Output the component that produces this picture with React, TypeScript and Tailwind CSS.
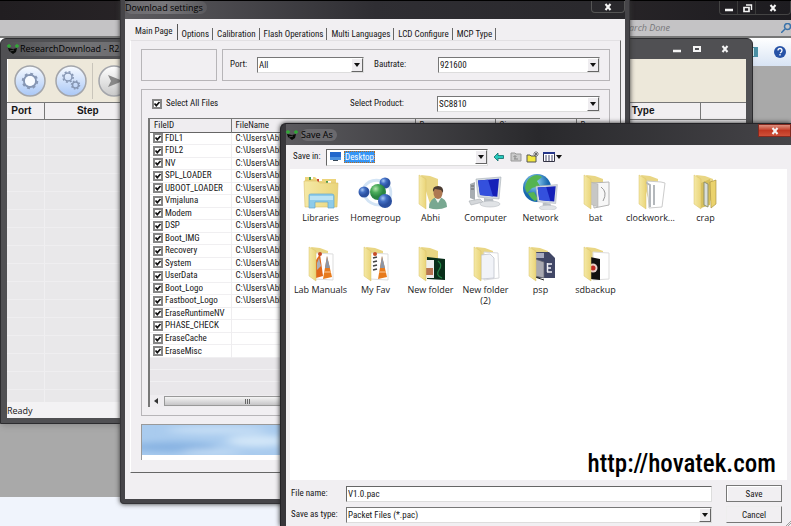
import { ReactNode } from "react";

const files = [
  "FDL1", "FDL2", "NV", "SPL_LOADER", "UBOOT_LOADER", "Vmjaluna", "Modem", "DSP", "Boot_IMG",
  "Recovery", "System", "UserData", "Boot_Logo", "Fastboot_Logo", "EraseRuntimeNV", "PHASE_CHECK",
  "EraseCache", "EraseMisc"
];

const tabs = ["Options", "Calibration", "Flash Operations", "Multi Languages", "LCD Configure", "MCP Type"];

const folderItems = [
  { label: "Libraries", kind: "libraries" },
  { label: "Homegroup", kind: "homegroup" },
  { label: "Abhi", kind: "user" },
  { label: "Computer", kind: "computer" },
  { label: "Network", kind: "network" },
  { label: "bat", kind: "bat" },
  { label: "clockwork...", kind: "clockwork" },
  { label: "crap", kind: "crap" },
  { label: "Lab Manuals", kind: "vlc" },
  { label: "My Fav", kind: "fav" },
  { label: "New folder", kind: "green" },
  { label: "New folder (2)", kind: "paper" },
  { label: "psp", kind: "psp" },
  { label: "sdbackup", kind: "sd" }
];

const Caption = ({ type }: { type: "min" | "max" | "restore" | "close" }) => (
  <svg viewBox="0 0 12 10" className="w-3 h-[10px]" fill="none" stroke="#f4f4f4" strokeWidth="2">
    {type === "min" && <path d="M2 7h8" strokeWidth="2.5" />}
    {type === "max" && <path d="M3 3h6v4H3z" />}
    {type === "restore" && (
      <>
        <path d="M3 4.5h5v4H3z" strokeWidth="1.7" />
        <path d="M5 2h5.5v5" strokeWidth="1.4" />
      </>
    )}
    {type === "close" && <path d="M3.5 2l5 6M8.500 2l-5 6" />}
  </svg>
);

const AppIcon = () => (
  <svg viewBox="0 0 12 12" className="w-3 h-3">
    <path d="M0 3h4M2 1v4M8 3h4M10 1v4" stroke="#2fae35" strokeWidth="1.300" />
    <path d="M1 5l5 1 4-1-1 4-3 2-4-3z" fill="#080a08" />
    <path d="M3 8l4-1" stroke="#777" strokeWidth=".6" />
  </svg>
);

const Select = ({ id, value, className }: { id: string; value: string; className: string }) => (
  <span className={"relative block h-4 " + className}>
    <select
      id={id}
      className="block appearance-none w-full h-4 pl-px pr-4 bg-white border border-t-[#777] border-l-[#777] border-b-[#ddd] border-r-[#ddd] leading-[14px] outline-none"
    >
      <option>{value}</option>
    </select>
    <Arrow />
  </span>
);

const Arrow = () => (
  <span className="absolute right-px top-px w-3 h-[14px] bg-[#efedf0] border border-white border-r-[#666] border-b-[#666] flex items-center justify-center pointer-events-none">
    <svg viewBox="0 0 6 4" className="w-[6px] h-1"><path d="M0 0h6L3 4z" fill="#111" /></svg>
  </span>
);

const Tick = ({ id }: { id: string }) => (
  <span className="relative block w-[10px] h-[10px] shrink-0">
    <input id={id} type="checkbox" defaultChecked className="peer block appearance-none w-[10px] h-[10px] bg-white border-2 border-[#858585]" />
    <svg viewBox="0 0 10 10" className="absolute inset-0 w-[10px] h-[10px] pointer-events-none hidden peer-checked:block">
      <path d="M2.500 4.500L4.300 6.600L7.500 3" fill="none" stroke="#111" strokeWidth="1.700" />
    </svg>
  </span>
);

const Folder = ({ children }: { children?: ReactNode }) => (
  <>
    <path d="M8 1l9 1 8 3v20l-8 5z" fill="#e9d684" />
    {children}
    <path d="M6 1l7 4v30l-7-5z" fill="url(#folderFront)" stroke="#d9c26a" strokeWidth=".5" />
  </>
);

const Monitor = () => (
  <>
    <path d="M8 5l25-2-2 22-21-2z" fill="#d7dde3" stroke="#a5acb4" strokeWidth=".6" />
    <path d="M10 6.500l21-1.700-1.700 18L12 21z" fill="#1520b8" />
    <path d="M10 6.500l10-.8 5 16.700L12 21z" fill="#3450dd" />
    <path d="M16 24l9 1 1 4h-10z" fill="#b8bec4" />
    <ellipse cx="22" cy="30" rx="10" ry="3" fill="#e0e3e6" stroke="#b9bdc2" strokeWidth=".6" />
  </>
);

const ItemIcon = ({ kind }: { kind: string }) => (
  <svg viewBox="0 0 36 36" className="w-9 h-9">
    {kind === "libraries" && (
      <>
        <path d="M2 3h10l2 2h19v24H2z" fill="#ecd47b" />
        <path d="M6 4h4M14 6h5M23 8h5" stroke="#fff" strokeWidth="2" />
        <path d="M7 3v3M24 7v3" stroke="#4b9b50" strokeWidth="2" />
        <path d="M15 5v3" stroke="#c94635" strokeWidth="2" />
        <path d="M1 7h13l3 2h18l-1 24H2z" fill="url(#folderFront)" stroke="#dbc06a" strokeWidth=".6" />
        <path d="M6 21q0-1 2-1h21q2 0 2 2v12h-6v-6H12v6H6z" fill="#8ecbe9" stroke="#64a8cf" strokeWidth=".7" />
        <path d="M7 22h23v4H7z" fill="#bbe3f5" />
      </>
    )}
    {kind === "homegroup" && (
      <>
        <path d="M6 13Q12 4 24 7M7 23q6 9 17 8M31 12q3 5 1 12" fill="none" stroke="#d3e4f5" strokeWidth="3" />
        <circle cx="6" cy="18" r="5.500" fill="url(#blueBall)" />
        <circle cx="27" cy="9" r="5.500" fill="url(#blueBall)" />
        <circle cx="20" cy="18" r="8" fill="url(#greenBall)" />
        <circle cx="27" cy="27" r="7" fill="url(#blueBall)" />
      </>
    )}
    {kind === "user" && (
      <>
        <Folder />
        <path d="M16 34q0-10 9-11 9 1 9 10-9 4-18 1z" fill="#78a891" />
        <path d="M22 24l3 5 3-5z" fill="#edf4ef" />
        <ellipse cx="25" cy="19" rx="4.500" ry="6" fill="#ad7852" />
        <path d="M20 18q-1-6 5-6 6 0 5 7l-2-3-6-1z" fill="#4b3b31" />
      </>
    )}
    {kind === "computer" && (
      <>
        <path d="M2 10l5-2v18l-5-2z" fill="#a7adb2" />
        <path d="M3 12h3M3 15h3" stroke="#666" strokeWidth="1" />
        <path d="M1 27l11-2 3 3-12 3z" fill="#d4d7da" stroke="#a8adb1" strokeWidth=".6" />
        <Monitor />
      </>
    )}
    {kind === "network" && (
      <>
        <circle cx="14" cy="14" r="14" fill="url(#globe)" />
        <path d="M8 3q6-4 11 0l-5 4 3 5-8 2-5 5-2-5q1-8 6-11zM5 19l6-1 4 7-3 2q-5-3-7-8z" fill="#55b450" />
        <g transform="translate(6 8) scale(.86)"><Monitor /></g>
      </>
    )}
    {kind === "bat" && (
      <Folder>
        <path d="M14 9l17-1v23l-15 3z" fill="#f7f7f7" stroke="#b4b4b4" />
        <path d="M23 13q7 5 2 14" fill="none" stroke="#999" />
        <path d="M12 8l8 2v23l-8-3z" fill="#c7c7c5" stroke="#aaa" strokeWidth=".5" />
      </Folder>
    )}
    {kind === "clockwork" && (
      <Folder>
        <path d="M14 7l14 1 4 1-3 24-13 1z" fill="#fff" stroke="#ccc" />
        <path d="M12 8l5 3v22M21 11v20" fill="none" stroke="#b4b8bc" strokeWidth="2" />
      </Folder>
    )}
    {kind === "crap" && (
      <Folder>
        <path d="M13 9l9-4v26l-9 3z" fill="#d7c05c" />
        <path d="M16 8l4 2v23l-4-2z" fill="#d9dedc" stroke="#8f916f" />
        <path d="M22 8l6-2v24l-5 4z" fill="#ead26d" stroke="#a18939" strokeWidth=".6" />
      </Folder>
    )}
    {(kind === "vlc" || kind === "fav") && (
      <Folder>
        <path d="M12 7l18 1v26l-18-1z" fill="#fff" stroke="#ddd" />
        {kind === "vlc" && (
          <>
            <path d="M17 8l3 22-7 2V14z" fill="#e0661a" />
            <path d="M16 12l2 8-4 4v-7z" fill="#a9afb9" />
          </>
        )}
        {kind === "fav" && <path d="M15 12l4-1M15 16l4-1M15 20l4-1M15 24l4-1" stroke="#444" strokeWidth="1.800" />}
        <path d="M24 10l5 21-9 2z" fill="#e77a1c" />
        <path d="M24 10l3 12h-5z" fill="#8d96a5" />
        <path d="M21 26h7" stroke="#f4b070" strokeWidth="1.500" />
        <circle cx="17" cy="8" r="2" fill="#c74c25" />
      </Folder>
    )}
    {kind === "green" && (
      <Folder>
        <path d="M14 11l18 2v21l-18-1z" fill="#092e1a" />
        <path d="M12 14h9v18h-9z" fill="#eee" />
        <path d="M13 22h7v7h-7z" fill="#b87552" />
        <path d="M25 15q5 4 1 9t3 8" fill="none" stroke="#238545" strokeWidth="1.200" />
      </Folder>
    )}
    {kind === "paper" && (
      <Folder>
        <path d="M16 6l14 1 1 25-15 2z" fill="#fff" stroke="#d8d9dc" />
        <path d="M13 9l9-1 4 4v20l-13 1z" fill="#f1f3f8" stroke="#bfc3cb" strokeWidth=".8" />
      </Folder>
    )}
    {kind === "psp" && (
      <Folder>
        <path d="M13 6h13l6 6v20H13z" fill="#414766" />
        <path d="M13 7h8v5h-8z" fill="#a8abc0" />
        <path d="M24 18h5M24 22h4M24 26h5M24.500 17v9" stroke="#f0f0f5" strokeWidth="1.500" />
        <path d="M12 13l9 3v16l-9-2z" fill="#a9a9b1" stroke="#62636d" strokeWidth=".7" />
        <path d="M12 31l9 3" stroke="#222" />
      </Folder>
    )}
    {kind === "sd" && (
      <Folder>
        <path d="M15 6l16 1v26l-16 1z" fill="#fff" stroke="#ddd" />
        <path d="M12 11l10 2v21l-10-1z" fill="#101010" />
        <circle cx="15" cy="22" r="4.500" fill="#e8cfc9" />
        <circle cx="15" cy="22" r="2.500" fill="#bf2923" />
      </Folder>
    )}
  </svg>
);

const SvgDefs = () => (
  <svg className="absolute w-0 h-0" aria-hidden="true">
    <defs>
      <linearGradient id="folderFront"><stop stopColor="#f5e9a6" /><stop offset="1" stopColor="#ead57a" /></linearGradient>
      <radialGradient id="blueBall" cx=".35" cy=".3"><stop stopColor="#a8c8f5" /><stop offset=".5" stopColor="#426fc4" /><stop offset="1" stopColor="#2a4f9f" /></radialGradient>
      <radialGradient id="greenBall" cx=".35" cy=".3"><stop stopColor="#b4e4b0" /><stop offset=".5" stopColor="#4bac5a" /><stop offset="1" stopColor="#2a8542" /></radialGradient>
      <radialGradient id="globe" cx=".4" cy=".3"><stop stopColor="#a5e2ff" /><stop offset="1" stopColor="#1767ad" /></radialGradient>
      <linearGradient id="roundBlue" x2="0" y2="1"><stop stopColor="#f8fbff" /><stop offset="1" stopColor="#a9c7f6" /></linearGradient>
      <linearGradient id="roundGray" x2="0" y2="1"><stop stopColor="#fff" /><stop offset="1" stopColor="#c9c9c9" /></linearGradient>
      <filter id="soft"><feGaussianBlur stdDeviation="6 3" /></filter>
    </defs>
  </svg>
);

const SkyBanner = () => (
  <svg viewBox="0 0 470 30" preserveAspectRatio="none" className="block w-full h-full">
    <path d="M0 0h470v30H0z" fill="#a9cbee" />
    <g filter="url(#soft)">
      <ellipse cx="30" cy="22" rx="45" ry="5" fill="#88b3e2" />
      <ellipse cx="75" cy="5" rx="50" ry="4" fill="#c6def5" />
      <ellipse cx="115" cy="16" rx="30" ry="6" fill="#d2e6f8" />
      <ellipse cx="70" cy="27" rx="30" ry="3" fill="#c3dcf4" />
    </g>
  </svg>
);

const RoundButton = ({ label, children, gray }: { label: string; children: ReactNode; gray?: boolean }) => (
  <button aria-label={label} className="w-8 h-8 shrink-0">
    <svg viewBox="0 0 32 32" className="w-8 h-8" fill="none">
      <circle cx="16" cy="16" r="15" fill={gray ? "url(#roundGray)" : "url(#roundBlue)"} stroke="#a3a5aa" strokeWidth="1.500" />
      {children}
    </svg>
  </button>
);

const Explorer = () => (
  <div className="flex flex-col h-full">
    <div className="h-5 shrink-0 flex justify-end border-t border-black bg-linear-to-r from-[#211e21] via-[#342e30] to-[#1d1c20]">
      <div className="flex w-[72px] h-[14px] border border-t-0 border-[#444] rounded-b">
        <button aria-label="Minimize" className="flex-1 flex items-center justify-center"><Caption type="min" /></button>
        <button aria-label="Restore" className="flex-1 flex items-center justify-center border-x border-[#3a3a3a]"><Caption type="restore" /></button>
        <button aria-label="Close" className="flex-[2] flex items-center justify-center"><Caption type="close" /></button>
      </div>
    </div>
    <div className="h-[18px] shrink-0 flex items-center justify-end bg-[#c4c3c5] border-b-2 border-[#777]">
      <span className="flex items-center w-[171px] justify-between">
        <span className="italic text-[9px] text-[#77777a] font-['Open_Sans',sans-serif]">Search Done</span>
        <svg viewBox="0 0 10 10" className="w-[10px] h-[10px]" fill="none" stroke="#3972aa" strokeWidth="1.500"><circle cx="6.500" cy="3.500" r="3" /><path d="M4 6L0 10" /></svg>
      </span>
    </div>
    <div className="h-7 shrink-0 flex items-center justify-end gap-4 pr-[5px] bg-linear-to-b from-white to-[#d8e4f4]">
      <svg viewBox="0 0 10 10" className="w-[10px] h-[10px]"><path d="M0 0h10v10H0z" fill="#4b91a6" /><path d="M1 1h5v8H1z" fill="#d6eff5" /></svg>
      <svg viewBox="0 0 12 12" className="w-3 h-3"><circle cx="6" cy="6" r="6" fill="#2752a6" /><path d="M4 4.500q0-2 2-2t2 2Q8 6 6 7M6 8v1.500" stroke="#fff" fill="none" strokeWidth="1.300" /></svg>
    </div>
    <div className="flex-1 bg-[#a9a9a9]" />
    <div className="h-[29px] shrink-0 bg-[#f0f4fc]" />
  </div>
);

const ResearchWindow = () => (
  <section className="absolute left-0 right-[38px] top-[38px] bottom-[102px] flex flex-col px-[6px] pb-[5px] bg-[#505053] border border-[#2c2c2f] rounded-t-md shadow-md">
    <header className="h-5 shrink-0 flex items-center justify-between font-['Open_Sans',sans-serif] text-[9px] text-black">
      <span className="flex items-center gap-px whitespace-nowrap bg-linear-to-r from-[#505053] via-[#747477] to-[#68686b]"><AppIcon />ResearchDownload - R2.9.9001</span>
      <span className="flex h-4 w-[75px] items-center">
        <button aria-label="Minimize"><Caption type="min" /></button>
        <button aria-label="Maximize" className="ml-2"><Caption type="max" /></button>
        <button aria-label="Close" className="ml-4"><Caption type="close" /></button>
      </span>
    </header>
    <div className="h-[43px] shrink-0 flex items-center pl-[6px] gap-[9px] bg-[#ede8da] border-l border-white">
      <RoundButton label="Settings">
        <circle cx="16" cy="16" r="6" stroke="#8797b4" strokeWidth="2" />
        <circle cx="16" cy="16" r="7" stroke="#8797b4" strokeWidth="2.500" strokeDasharray="2.750 2.750" />
        <circle cx="16" cy="16" r="5" fill="#f8fbff" />
      </RoundButton>
      <RoundButton label="Options">
        <circle cx="13" cy="12" r="4" stroke="#8797b4" strokeWidth="1.500" />
        <circle cx="13" cy="12" r="5.200" stroke="#8797b4" strokeWidth="1.500" strokeDasharray="2 2.080" />
        <circle cx="20.500" cy="20" r="3" stroke="#8797b4" strokeWidth="1.500" />
        <circle cx="20.500" cy="20" r="4" stroke="#8797b4" strokeWidth="1.500" strokeDasharray="1.500 1.640" />
      </RoundButton>
      <span className="flex h-9 pl-[5px] -ml-1 border-l border-[#c9c5bb] items-center">
        <RoundButton label="Start" gray><path d="M10 10l15 6-15 6 3-6z" fill="#888" /></RoundButton>
      </span>
    </div>
    <table className="w-full shrink-0 table-fixed border-collapse font-['Liberation_Sans',sans-serif] text-[10px] leading-4">
      <thead>
        <tr className="h-[17px] bg-[#f1eff1] border-y border-[#777]">
          <th className="w-[37px] border-r border-[#777] p-0 pr-2">Port</th>
          <th className="w-[87px] p-0">Step</th>
          <th className="p-0" />
          <th className="w-[138px] border-r border-[#777] p-0">MCP Type</th>
          <th className="w-[46px] p-0" />
        </tr>
      </thead>
    </table>
    <div className="flex-1 min-h-0 overflow-hidden bg-[#e9e8ea] flex flex-col">
      {files.map((file) => (
        <div key={file} className="h-[18px] shrink-0 border-b border-[#efeef0] flex"><span className="w-[38px] border-r border-[#f0eff1]" /></div>
      ))}
    </div>
    <footer className="h-4 shrink-0 bg-[#f3f2f4] font-['Open_Sans',sans-serif] text-[9px] leading-[18px]">Ready</footer>
  </section>
);

const DownloadSettings = () => (
  <section className="absolute left-[120px] right-[161px] top-0 bottom-[22px] flex flex-col px-[4px] pb-1 bg-[#464549] rounded-b border border-t-0 border-[#353438] shadow-[0_0_5px_#333]">
    <header className="h-[19px] shrink-0 flex justify-between border-t border-black bg-linear-to-r from-[#5d5c60] via-[#2f2e33] to-[#29282c]">
      <h2 className="font-['Open_Sans',sans-serif] text-[9px] leading-[14px] text-black"><span className="bg-linear-to-r from-[#6b6a6e] via-[#77767a] to-[#5a595d] pr-1 rounded-full">Download settings</span></h2>
      <button aria-label="Close" className="w-[34px] h-3 border border-t-0 border-[#555] rounded-b flex items-center justify-center"><Caption type="close" /></button>
    </header>
    <div className="flex-1 min-h-0 flex flex-col bg-[#f1eff2] pl-[5px] pr-1 pt-[5px] pb-[26px]">
      <nav className="flex items-end h-4 shrink-0 leading-3 whitespace-nowrap">
        <button className="h-4 pl-[5px] pr-1 border-r border-[#555] pb-[3px]">Main Page</button>
        {tabs.map((tab) => (
          <button key={tab} className="pl-1 pr-[3px] border-r border-[#666]">{tab}</button>
        ))}
      </nav>
      <div className="flex-1 min-h-0 flex flex-col gap-2 border border-t-[#e2e0e3] border-l-white border-r-[#666] border-b-[#666] px-[10px] pt-2 pb-3">
        <div className="flex h-8 gap-[5px] shrink-0">
          <div className="w-[76px] border border-[#b7b5b8]" />
          <div className="flex-1 flex items-center border border-[#b7b5b8] pl-[7px] pr-[9px]">
            <label htmlFor="port" className="w-[27px]">Port:</label>
            <Select id="port" value="All" className="w-[107px]" />
            <label htmlFor="baud" className="ml-[10px] w-16">Bautrate:</label>
            <Select id="baud" value="921600" className="flex-1" />
          </div>
        </div>
        <div className="flex-1 min-h-0 flex flex-col border border-[#b7b5b8] pt-[5px] pl-[6px] pr-[9px] pb-2">
          <div className="flex items-center h-[18px] shrink-0 mb-[5px]">
            <span className="flex items-center gap-1 w-[202px] pl-1"><Tick id="all" /><label htmlFor="all">Select All Files</label></span>
            <label htmlFor="product" className="w-[87px]">Select Product:</label>
            <Select id="product" value="SC8810" className="flex-1" />
          </div>
          <div className="flex-1 min-h-0 flex flex-col border-l-2 border-t border-[#777] bg-[#e9e7ea] overflow-hidden">
            <table className="w-full h-[239px] table-fixed border-collapse leading-[11px] bg-white">
              <thead>
                <tr className="h-[13px] bg-[#efedf0] border-b border-[#666] text-left">
                  <th className="w-[81px] p-0 pl-1 border-r border-[#777] font-normal">FileID</th>
                  <th className="w-[184px] p-0 pl-1 border-r border-[#777] font-normal">FileName</th>
                  <th className="w-20 p-0 pl-1 border-r border-[#777] font-normal">Base</th>
                  <th className="w-[81px] p-0 pl-1 border-r border-[#777] font-normal">Size</th>
                  <th className="p-0 pl-1 font-normal">Res</th>
                </tr>
              </thead>
              <tbody>
                {files.map((file, index) => (
                  <tr key={file} className="border-b border-[#f0eff1]">
                    <td className="p-0 pl-[3px] border-r border-[#eeedef]">
                      <span className="flex items-center gap-[2px]"><Tick id={file} /><label htmlFor={file}>{file}</label></span>
                    </td>
                    <td className="p-0 pl-1">{index < 14 ? "C:\\Users\\Abhi" : ""}</td>
                    <td className="p-0" /><td className="p-0" /><td className="p-0" />
                  </tr>
                ))}
              </tbody>
            </table>
            <div className="flex-1 flex flex-col">
              <div className="h-3 border-b border-[#f1f0f2]" />
              <div className="h-3 border-b border-[#f1f0f2]" />
            </div>
            <div className="h-3 shrink-0 flex items-center gap-[6px] pl-1 bg-[#efedf0]">
              <svg viewBox="0 0 4 6" className="w-1 h-[6px]"><path d="M4 0v6L0 3z" fill="#333" /></svg>
              <div className="w-[166px] h-[10px] border border-[#999] bg-linear-to-b from-[#f5f5f5] to-[#c6c5c7] flex items-center justify-center gap-px">
                <i className="w-px h-[5px] bg-[#666]" /><i className="w-px h-[5px] bg-[#666]" /><i className="w-px h-[5px] bg-[#666]" />
              </div>
            </div>
          </div>
        </div>
        <div className="h-9 shrink-0 border-l border-t border-[#999] bg-white pb-[5px]">
          <SkyBanner />
        </div>
      </div>
    </div>
  </section>
);

const SaveAs = () => (
  <section className="absolute left-[280px] right-0 top-[123px] bottom-0 flex flex-col pl-[5px] bg-[#38373b] border-t border-l border-[#242327] rounded-tl-md shadow-[0_0_5px_#222]">
    <header className="h-[21px] shrink-0 flex justify-between bg-linear-to-r from-[#5b5a5e] via-[#29292c] to-[#454448]">
      <h2 className="flex items-center font-['Open_Sans',sans-serif] text-[9px] text-black"><AppIcon /><span className="ml-[3px] bg-[#6b6a6e] rounded-full pr-1 leading-3">Save As</span></h2>
      <button aria-label="Close" className="w-[33px] h-[13px] flex items-center justify-center bg-linear-to-b from-[#dc8f7f] via-[#c13722] to-[#cf5038] border border-[#832a20]"><Caption type="close" /></button>
    </header>
    <div className="flex-1 min-h-0 flex flex-col bg-[#f1eff2] pl-1 relative">
      <div className="h-6 shrink-0 flex items-center pl-[3px]">
        <label htmlFor="folder" className="w-[33px] whitespace-nowrap">Save in:</label>
        <span className="relative block w-[162px] h-[17px]">
          <select id="folder" className="block appearance-none w-full h-[17px] bg-white border border-t-[#666] border-l-[#666] border-[#ddd] pl-[17px] text-transparent"><option>Desktop</option></select>
          <span className="absolute left-1 top-[2px] flex items-center gap-[3px] pointer-events-none">
            <svg viewBox="0 0 11 9" className="w-[11px] h-[9px]"><path d="M0 0h11v8H0z" fill="#2267cc" /><path d="M0 5h11v3H0z" fill="#4c91df" /><path d="M3 8.500h5" stroke="#345" /></svg>
            <span className="bg-[#3595f5] text-white leading-3 px-px outline outline-dotted outline-1 outline-[#b56c20] -outline-offset-1">Desktop</span>
          </span>
          <Arrow />
        </span>
        <button aria-label="Back" className="ml-[6px]"><svg viewBox="0 0 10 10" className="w-[10px] h-[10px]"><path d="M0 5l4-4v2.500h5.500v3H4V9z" fill="#27c9bc" stroke="#126b68" strokeWidth=".8" /></svg></button>
        <button aria-label="Up" className="ml-[6px]"><svg viewBox="0 0 12 10" className="w-3 h-[10px]"><path d="M1 1h4l1 1h5v7H1z" fill="#c9c9c9" stroke="#999" /><path d="M4 7h4M5 7V4M3.500 5L5 3.500 6.500 5" stroke="#888" fill="none" /></svg></button>
        <button aria-label="New folder" className="ml-1"><svg viewBox="0 0 13 12" className="w-[13px] h-3"><path d="M1 4h3l1 1h5v6H1z" fill="#f3e83f" stroke="#555" /><path d="M10 0v6M7 3h6M8 1l4 4M12 1L8 5" stroke="#555" strokeWidth=".7" /></svg></button>
        <button aria-label="Views" className="ml-1"><svg viewBox="0 0 19 10" className="w-[19px] h-[10px]"><path d="M.5.5h11v9H.5z" fill="#fff" stroke="#334" /><path d="M0 1h12" stroke="#25358a" strokeWidth="2" /><path d="M2 4h8M2 6h8M2 8h8" stroke="#446" strokeDasharray="2 1" /><path d="M13 3h6l-3 4z" fill="#111" /></svg></button>
      </div>
      <div className="flex-1 min-h-0 flex flex-col bg-white mr-1 pt-[5px]">
        <ul className="grid grid-cols-[repeat(8,55px)] auto-rows-[72px] pl-[3px] font-['Open_Sans',sans-serif] text-[9px] leading-[11px] text-[#222]">
          {folderItems.map((item) => (
            <li key={item.label} className="flex flex-col items-center text-center">
              <ItemIcon kind={item.kind} />
              <span className="pt-[2px]">{item.label}</span>
            </li>
          ))}
        </ul>
        <a href="http://hovatek.com" className="mt-auto self-end mr-[11px] text-[25px] leading-8 font-medium text-black font-['Roboto_Condensed','Liberation_Sans',sans-serif]">http://hovatek.com</a>
      </div>
      <div className="shrink-0 grid grid-cols-[55px_1fr_56px] gap-y-1 pt-[5px] pb-[3px] pr-[9px] pl-px items-center whitespace-nowrap">
        <label htmlFor="name">File name:</label>
        <input id="name" defaultValue="V1.0.pac" className="h-4 mr-[14px] bg-white border border-t-[#666] border-l-[#666] border-[#ddd] pl-px outline-none" />
        <button className="h-[17px] border border-[#777] shadow-[inset_1px_1px_#fff] leading-3">Save</button>
        <label htmlFor="type">Save as type:</label>
        <Select id="type" value="Packet Files (*.pac)" className="mr-[14px]" />
        <button className="h-[17px] border border-[#eee] border-r-[#777] border-b-[#777] leading-3">Cancel</button>
      </div>
      <svg viewBox="0 0 5 5" className="absolute right-0 bottom-0 w-[5px] h-[5px]"><path d="M0 5L5 0M2 5l3-3" stroke="#888" strokeWidth=".8" /></svg>
    </div>
  </section>
);

export default function App() {
  return (
    <main className="relative h-screen overflow-hidden text-[9px] text-[#161616] font-['Roboto_Condensed','Roboto','Liberation_Sans',sans-serif]">
      <SvgDefs />
      <Explorer />
      <ResearchWindow />
      <DownloadSettings />
      <SaveAs />
    </main>
  );
}
